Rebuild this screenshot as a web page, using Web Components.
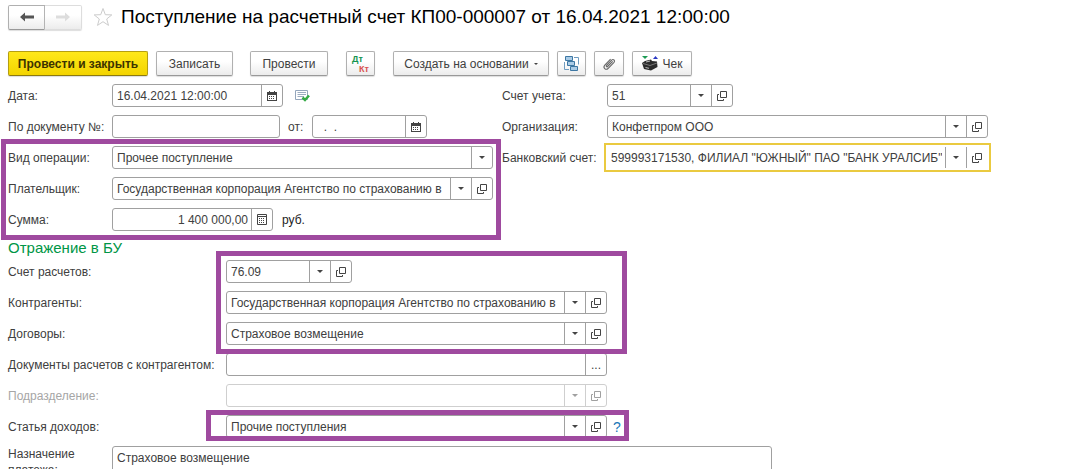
<!DOCTYPE html>
<html lang="ru">
<head>
<meta charset="utf-8">
<title>Поступление на расчетный счет</title>
<style>
  body { margin: 0; background: #fff; color: #404040; font: 12px/16px "Liberation Sans", Arial, sans-serif; }
</style>
</head>
<body>
<receipt-page></receipt-page>

<template id="t-page">
  <style>
    :host { display: block; height: calc(100vh - 6px); overflow: hidden; }
    header { display: flex; align-items: center; height: 34px; padding: 0 8px; }
    nav { display: flex; margin-right: 11px; }
    h1 { margin: 0 0 0 8px; font-size: 19px; line-height: 24px; font-weight: 400; color: #000; white-space: nowrap; }
    .tools { display: flex; align-items: center; margin-top: 17px; padding: 0 8px; }
    .g8 { margin-right: 8px; } .g17 { margin-right: 17px; } .g18 { margin-right: 18px; }
    main { padding: 8px 8px 0; }
    .cols { display: grid; grid-template-columns: minmax(0, 485px) minmax(0, 486px); column-gap: 9px; align-items: start; }
    .stack { display: flex; flex-direction: column; gap: 8px; }
    .left { --label: 104px; } .right { --label: 105px; }
    .pair { display: flex; align-items: center; }
    .pair .icon { margin-left: 12px; }
    .date { flex: 0 0 275px; }
    .num { flex: 0 0 272px; }
    .from { flex: 0 0 139px; margin-left: 8px; --label: 24px; }
    .sum { flex: 0 0 265px; }
    .unit { margin-left: 9px; color: #222; }
    .acc { width: 231px; }
    h2 { margin: 8px 0 3px; font-size: 15px; line-height: 18px; font-weight: 400; color: #009646; }
    .book { --label: 218px; max-width: 599px; }
    .book .acc { width: 344px; }
    .help { display: flex; align-items: center; margin-right: -20px; }
    .help form-field { flex: 1; }
    .help a { width: 20px; text-align: center; font-size: 14px; color: #1a78b8; text-decoration: none; }
    .purpose { margin-top: 8px; max-width: 764px; --label: 104px; }
  </style>
  <header>
    <nav aria-label="Переходы">
      <tool-button icon="back" label="Назад" kind="first"></tool-button>
      <tool-button icon="forward" label="Вперед" kind="last"></tool-button>
    </nav>
    <ui-icon name="star"></ui-icon>
    <h1>Поступление на расчетный счет КП00-000007 от 16.04.2021 12:00:00</h1>
  </header>
  <div class="tools" role="toolbar">
    <tool-button class="g8" kind="primary" style="--w:140px">Провести и закрыть</tool-button>
    <tool-button class="g17" style="--w:77px">Записать</tool-button>
    <tool-button class="g18" style="--w:78px">Провести</tool-button>
    <tool-button class="g18" style="--w:29px" label="Дт Кт" kind="dtkt"></tool-button>
    <tool-button class="g8" style="--w:156px" kind="menu">Создать на основании</tool-button>
    <tool-button class="g8" style="--w:29px" icon="structure" label="Структура подчиненности"></tool-button>
    <tool-button class="g8" style="--w:30px" icon="clip" label="Файлы"></tool-button>
    <tool-button style="--w:60px" icon="printer">Чек</tool-button>
  </div>
  <main>
    <div class="cols">
      <div class="stack left">
        <div class="pair">
          <form-field class="date" label="Дата:" value="16.04.2021 12:00:00" buttons="calendar"></form-field>
          <ui-icon class="icon" name="posted"></ui-icon>
        </div>
        <div class="pair">
          <form-field class="num" label="По документу №:"></form-field>
          <form-field class="from" label="от:" value="&nbsp; .&nbsp; ." buttons="calendar"></form-field>
        </div>
        <mark-frame style="--t:7px;--r:8px;--b:9px;--l:7px">
          <div class="stack">
            <form-field label="Вид операции:" value="Прочее поступление" buttons="drop"></form-field>
            <form-field label="Плательщик:" value="Государственная корпорация Агентство по страхованию в" buttons="drop open"></form-field>
            <div class="pair">
              <form-field class="sum" numeric label="Сумма:" value="1 400 000,00" buttons="calc"></form-field>
              <span class="unit">руб.</span>
            </div>
          </div>
        </mark-frame>
      </div>
      <div class="stack right">
        <form-field class="acc" label="Счет учета:" value="51" buttons="drop open"></form-field>
        <form-field label="Организация:" value="Конфетпром ООО" buttons="drop open"></form-field>
        <form-field focused label="Банковский счет:" value="599993171530, ФИЛИАЛ &quot;ЮЖНЫЙ&quot; ПАО &quot;БАНК УРАЛСИБ&quot;" buttons="drop open"></form-field>
      </div>
    </div>
    <h2>Отражение в БУ</h2>
    <div class="stack book">
      <mark-frame style="--t:9px;--r:20px;--b:9px;--l:-208px">
        <div class="stack">
          <form-field class="acc" label="Счет расчетов:" value="76.09" buttons="drop open"></form-field>
          <form-field label="Контрагенты:" value="Государственная корпорация Агентство по страхованию в" buttons="drop open"></form-field>
          <form-field label="Договоры:" value="Страховое возмещение" buttons="drop open"></form-field>
        </div>
      </mark-frame>
      <form-field label="Документы расчетов с контрагентом:" buttons="dots"></form-field>
      <form-field disabled label="Подразделение:" buttons="drop open"></form-field>
      <mark-frame style="--t:5px;--r:22px;--b:3px;--l:-198px">
        <div class="help">
          <form-field label="Статья доходов:" value="Прочие поступления" buttons="drop open"></form-field>
          <a href="#help" aria-label="Справка">?</a>
        </div>
      </mark-frame>
    </div>
    <form-field class="purpose" multiline label="Назначение платежа:" value="Страховое возмещение"></form-field>
  </main>
</template>

<script>
const ICONS = {
  back: [14, 10, '<path d="M0 5 5 0.500V3.500H14V6.500H5V9.500Z" fill="#555"/>'],
  forward: [14, 10, '<path d="M14 5 9 0.500V3.500H0V6.500H9V9.500Z" fill="#ddd"/>'],
  star: [20, 20, '<path d="M10 1.500 12.300 7.700 18.800 7.900 13.700 12 15.500 18.400 10 14.700 4.500 18.400 6.300 12 1.200 7.900 7.700 7.700Z" fill="none" stroke="#ccc"/>'],
  calendar: [10, 10, '<path d="M0 1H10V10H0ZM1 4V9H9V4Z" fill="#444" fill-rule="evenodd"/><path d="M2.500 0V2M7.500 0V2" stroke="#444"/><path d="M2 5.500H8M2 7.500H8" stroke="#444" stroke-dasharray="1 1"/>'],
  calc: [10, 11, '<path d="M.5.5H9.500V10.500H.5ZM1 2.500H9" fill="none" stroke="#444"/><path d="M2 4.500H8M2 6.500H8M2 8.500H8" stroke="#444" stroke-dasharray="1 1"/>'],
  drop: [6, 3, '<path d="M0 0H6L3 3Z" fill="#444"/>'],
  open: [10, 10, '<path d="M3.500.5H9.500V6.500H3.500ZM2 3.500H.5V9.500H6.500V8" fill="none" stroke="#444"/>'],
  posted: [15, 13, '<path d="M.5 1.500H12.500V10.500H.5Z" fill="#fff" stroke="#94a6bc"/><path d="M2.500 3.500H11M2.500 5.500H11M2.500 7.500H9" stroke="#9cacc0"/><path d="M7.500 8.500 10 11 14 6.500" fill="none" stroke="#35ab45" stroke-width="2.500"/>'],
  structure: [15, 15, '<path d="M1.500.5H8.500V4.500H1.500ZM3.500 5.500H10.500V9.500H3.500ZM6.500 10.500H13.500V14.500H6.500Z" fill="#a9cbe6" stroke="#3d77a3"/><path d="M10 1.500H14.500V8.500M.5 6V13.500H5" fill="none" stroke="#6f9cc0"/>'],
  clip: [14, 14, '<path d="M10.700 4.300 5.600 9.500C4.800 10.300 3.700 9.300 4.500 8.400L9.700 3.100C11.300 1.600 13.500 3.600 12 5.300L6.200 11.300C3.800 13.700.5 10.700 2.800 8.100L8.600 2.100" fill="none" stroke="#666" stroke-width="1.100"/>'],
  printer: [16, 16, '<path d="M0 0H6L3 3Z" fill="#1d9b54"/><path d="M11 3H16L13.500 0Z" fill="#2a38c4"/><path d="M0 7 3 5 9 3.500 10 5 15 5.500 15.500 11 9 14.500 2 13Z" fill="#2b2b2b"/><path d="M1 7.500 8 9.500 15 7" stroke="#777" fill="none"/><path d="M4 6 8 5M3.500 11.500 7 12.300" stroke="#bbb"/>']
};
const svg = (name) => {
  const [w, h, body] = ICONS[name];
  return `<svg width="${w}" height="${h}" viewBox="0 0 ${w} ${h}" aria-hidden="true">${body}</svg>`;
};
const TITLES = { calendar: 'Календарь', calc: 'Калькулятор', drop: 'Список', open: 'Открыть', dots: 'Выбрать' };
const esc = (s) => s.replace(/&/g, '&amp;').replace(/"/g, '&quot;');

customElements.define('ui-icon', class extends HTMLElement {
  constructor() { super(); this.attachShadow({ mode: 'open' }); }
  connectedCallback() {
    this.shadowRoot.innerHTML = `<style>:host{display:block;flex:none}svg{display:block}</style>${svg(this.getAttribute('name'))}`;
  }
});

customElements.define('tool-button', class extends HTMLElement {
  constructor() { super(); this.attachShadow({ mode: 'open' }); }
  connectedCallback() {
    const kind = this.getAttribute('kind') || '';
    const icon = this.getAttribute('icon');
    const label = this.getAttribute('label');
    this.shadowRoot.innerHTML = `<style>
      :host { display: block; flex: none; }
      button { box-sizing: border-box; width: var(--w, 37px); height: 25px; padding: 0; display: flex; align-items: center; justify-content: center; gap: 5px;
        font: inherit; color: #404040; white-space: nowrap; border: 1px solid #b0b0b0; border-bottom-color: #999; border-radius: 2px;
        background: linear-gradient(#fff 40%, #ececec); box-shadow: 0 1px 1px #ddd; }
      .primary { font-weight: 700; color: #3c3300; border-color: #b59f10; border-bottom-color: #8c7a10; background: linear-gradient(#ffe81a, #f3d400); }
      .first { border-radius: 2px 0 0 2px; }
      .last { border-color: #ddd; border-left: 0; border-radius: 0 2px 2px 0; }
      .dtkt { flex-direction: column; align-items: stretch; gap: 0; padding: 0 5px; font-size: 9px; line-height: 10px; font-weight: 700; }
      .dtkt b { color: #149350; text-align: left; } .dtkt i { color: #d9534f; font-style: normal; text-align: right; }
      svg { display: block; flex: none; }
    </style><button type="button" class="${kind}" ${label ? `aria-label="${label}"` : ''}>${icon ? svg(icon) : ''}${kind === 'dtkt' ? '<b>Дт</b><i>Кт</i>' : '<slot></slot>'}${kind === 'menu' ? '<svg width="4" height="2" aria-hidden="true"><path d="M0 0H4L2 2Z" fill="#444"/></svg>' : ''}</button>`;
  }
});

customElements.define('form-field', class extends HTMLElement {
  constructor() { super(); this.attachShadow({ mode: 'open' }); }
  connectedCallback() {
    const a = (n) => this.getAttribute(n) || '';
    const off = this.hasAttribute('disabled') ? 'disabled' : '';
    const multi = this.hasAttribute('multiline');
    const buttons = a('buttons').split(' ').filter(Boolean)
      .map((b) => `<button type="button" ${off} aria-label="${TITLES[b]}">${b === 'dots' ? '...' : svg(b)}</button>`).join('');
    this.shadowRoot.innerHTML = `<style>
      :host { display: flex; align-items: center; min-width: 0; max-width: 100%; }
      :host([multiline]) { align-items: flex-start; }
      label { flex: 0 0 var(--label, 104px); line-height: 16px; white-space: nowrap; }
      :host([multiline]) label { white-space: normal; box-sizing: border-box; padding-right: 20px; }
      .box { flex: 1; min-width: 0; box-sizing: border-box; display: flex; height: 23px; border: 1px solid #a0a0a0; border-radius: 3px; background: #fff; }
      :host([multiline]) .box { height: 60px; }
      input, textarea { flex: 1; min-width: 0; width: 0; box-sizing: border-box; border: 0; margin: 0; padding: 0 3px 0 4px; background: none; font: inherit; color: inherit; outline: 0; resize: none; }
      textarea { padding-top: 3px; }
      :host([numeric]) input { text-align: right; }
      button { box-sizing: border-box; flex: 0 0 21px; padding: 0; border: 0; border-left: 1px solid #a0a0a0; background: none; display: flex; align-items: center; justify-content: center; font: inherit; color: #404040; }
      svg { display: block; flex: none; }
      :host([disabled]) label { color: #a6a6a6; }
      :host([disabled]) .box, :host([disabled]) button { border-color: #cfcfcf; }
      :host([disabled]) button { color: #a6a6a6; }
      :host([disabled]) svg { opacity: .5; }
      :host([focused]) .box { border-color: transparent; border-radius: 0; outline: 2px solid #eaca40; outline-offset: 1px; }
      :host([focused]) input { padding: 0 3px; }
    </style><label for="f">${a('label')}</label><div class="box">${multi
      ? `<textarea id="f">${a('value')}</textarea>`
      : `<input id="f" type="text" value="${esc(a('value'))}" ${off}>`}${buttons}</div>`;
  }
});

customElements.define('mark-frame', class extends HTMLElement {
  constructor() {
    super();
    this.attachShadow({ mode: 'open' }).innerHTML = `<style>
      :host { display: block; position: relative; }
      .frame { position: absolute; inset: calc(0px - var(--t)) calc(0px - var(--r)) calc(0px - var(--b)) calc(0px - var(--l)); border: 5px solid #9f4a9f; pointer-events: none; z-index: 1; }
    </style><slot></slot><div class="frame"></div>`;
  }
});

customElements.define('receipt-page', class extends HTMLElement {
  constructor() {
    super();
    this.attachShadow({ mode: 'open' }).append(document.getElementById('t-page').content.cloneNode(true));
  }
});
</script>
</body>
</html>
